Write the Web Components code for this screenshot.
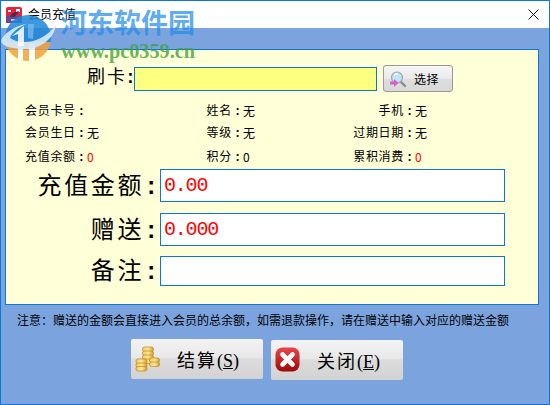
<!DOCTYPE html>
<html lang="zh-CN"><head><meta charset="utf-8"><style>
html,body{margin:0;padding:0;background:#7ba4df}
body{font:12px "Noto Sans CJK SC","Liberation Sans",sans-serif;color:#000}
</style></head><body>
<recharge-window>
<title-bar>会员充值</title-bar>
<water-mark></water-mark>
<yellow-panel>
  <card-row></card-row>
  <info-grid>
    <info-cell label="会员卡号" w="62" first></info-cell><info-cell label="姓名" value="无" w="137"></info-cell><info-cell label="手机" value="无" w="148"></info-cell>
    <info-cell label="会员生日" value="无" w="62" first></info-cell><info-cell label="等级" value="无" w="137"></info-cell><info-cell label="过期日期" value="无" w="148"></info-cell>
    <info-cell label="充值余额" value="0" red w="62" first></info-cell><info-cell label="积分" value="0" w="137"></info-cell><info-cell label="累积消费" value="0" red w="148"></info-cell>
  </info-grid>
  <form-row label="充值金额" value="0.00" h="33"></form-row>
  <form-row label="赠送" value="0.000" h="33" style="margin-top:11px"></form-row>
  <form-row label="备注" value="" h="30" style="margin-top:10px"></form-row>
</yellow-panel>
<note-line>注意：赠送的金额会直接进入会员的总余额，如需退款操作，请在赠送中输入对应的赠送金额</note-line>
<button-bar>
  <big-button icon="coins" text="结算" key="S"></big-button>
  <big-button icon="close" text="关闭" key="E" style="margin-top:1px"></big-button>
</button-bar>
</recharge-window>
<script>
const ICONS={
coins:`<svg width="26" height="26" viewBox="0 0 26 26"><defs><linearGradient id="g" x1="0" x2="1"><stop offset="0" stop-color="#f5c95a"/><stop offset=".5" stop-color="#ffe98e"/><stop offset="1" stop-color="#d99a2b"/></linearGradient></defs>
<g stroke="#b9862c" stroke-width=".7" fill="url(#g)"><rect x="7.5" y="1" width="11" height="4.5" rx="2"/><rect x="7.5" y="5" width="11" height="4.5" rx="2"/><rect x="7.5" y="9" width="11" height="4.5" rx="2"/><rect x="7.5" y="13" width="11" height="4.5" rx="2"/><rect x="14.500" y="12" width="10" height="4.500" rx="2"/><rect x="14.500" y="16" width="10" height="4.500" rx="2"/><rect x="1" y="13" width="11" height="4.500" rx="2"/><rect x="1" y="17" width="11" height="4.500" rx="2"/><rect x="1" y="20.500" width="11" height="4.500" rx="2"/></g></svg>`,
close:`<svg width="26" height="26" viewBox="0 0 26 26"><defs><linearGradient id="r" x1="0" x2="0" y1="0" y2="1"><stop offset="0" stop-color="#e8474a"/><stop offset="1" stop-color="#9c0a0a"/></linearGradient></defs><rect x=".5" y=".5" width="24" height="24" rx="7" fill="url(#r)"/><path d="M7.500 7.500 17.500 17.500M17.500 7.500 7.500 17.500" stroke="#fff" stroke-width="4.600" stroke-linecap="round"/></svg>`,
find:`<svg width="18" height="18" viewBox="0 0 18 18"><path d="M11 11l5 5" stroke="#8a8a8a" stroke-width="2.400" stroke-linecap="round"/><circle cx="8" cy="7.500" r="5.500" fill="#bfe6f7" stroke="#9aa4ab" stroke-width="1.200"/><path d="M5 5.500a3.500 3 0 0 1 4-1.500" stroke="#fff" fill="none" stroke-width="1.200"/><path d="M1 11.500h4v-2.500l4.500 4-4.500 4v-2.500h-4z" fill="#d95fc2"/></svg>`
};
function def(name,css,html){
  customElements.define(name,class extends HTMLElement{
    connectedCallback(){
      if(this.shadowRoot)return;
      const s=this.attachShadow({mode:'open'});
      s.innerHTML=`<style>${css}</style>`+(typeof html==='function'?html(this):html);
    }
  });
}
def('recharge-window',`:host{display:flex;flex-direction:column;position:relative;box-sizing:border-box;width:550px;height:405px;border:1px solid #0a78d4;background:#7ba4df;overflow:hidden}`,`<slot></slot>`);
def('title-bar',`:host{display:flex;align-items:center;height:27px;background:#fff;flex:none;font-size:12px;padding-left:5px}
 .t{margin-left:6px;position:relative;top:-1px}.x{margin-left:auto;margin-right:10px;display:flex}`,
 `<svg width="16" height="16" viewBox="0 0 16 16"><rect width="16" height="16" rx="2" fill="#e8203a"/><rect y="9" width="16" height="7" fill="#6a4a8c"/><path d="M2 3h3v2H2zM10 2h4v3h-4z" fill="#fff"/><path d="M4 10c2-5 6-5 9-6-2 3-3 5-5 6z" fill="#4a2a5c"/><rect x="5" y="12" width="6" height="2" fill="#b9c7e6"/></svg><span class="t"><slot></slot></span>
 <span class="x"><svg width="11" height="11" viewBox="0 0 11 11"><path d="M.5.5l10 10M10.500.5l-10 10" stroke="#111" stroke-width="1"/></svg></span>`);
def('water-mark',`:host{display:block;position:absolute;left:-1px;top:-1px;width:210px;height:70px;pointer-events:none}
 svg{position:absolute;left:0;top:14px}
 .a{position:absolute;left:60px;top:4px;font:700 27px/36px "Noto Sans CJK SC",sans-serif;color:rgba(33,140,235,.72);white-space:nowrap}
 .b{position:absolute;left:61px;top:40px;font:700 20.300px/22px "Liberation Serif",serif;color:rgba(62,160,62,.8);white-space:nowrap}`,
 `<svg width="60" height="50" viewBox="0 0 60 50"><defs><clipPath id="c"><circle cx="28" cy="24" r="23"/></clipPath></defs>
 <g clip-path="url(#c)" opacity=".85"><rect width="60" height="50" fill="#1d86d8"/><rect y="28" width="60" height="22" fill="#f2a23c"/><path d="M18 30h5v20h-5zM29 30h6v20h-6z" fill="#fff"/></g>
 <path d="M1 27C3 20 14 12 26 10c-8 4-14 8-16 14 8 6 30 8 46-13-2 14-16 24-30 24C14 35 2 33 1 27z" fill="#d6e8f6" opacity=".92"/>
 <path d="M12 22l12-10v20h-6V20z" fill="#fff" opacity=".85"/><path d="M28 24V10h6l-1 15z" fill="#7fbdec" opacity=".7"/></svg>
 <div class="a">河东软件园</div><div class="b">www.pc0359.cn</div>`);
def('yellow-panel',`:host{display:flex;flex-direction:column;box-sizing:border-box;height:256px;margin:21px 10px 0 4px;flex:none;border:1px solid #0a78d4;background:#ffffd8;padding-top:15px}`,`<slot></slot>`);
def('card-row',`:host{display:flex;align-items:center;height:27px}
 .l{width:128px;box-sizing:border-box;padding-right:2px;text-align:right;font-size:18px;line-height:24px;letter-spacing:2px;position:relative;top:-2px;white-space:nowrap}
 .c{display:inline-block;width:7px;margin-left:-2px;text-align:center;letter-spacing:0;font:700 18px/24px "Liberation Mono",monospace}
 .i{width:243px;height:24px;box-sizing:border-box;border:1px solid #0a78d4;background:#ffff80}
 .b{margin-left:6px;width:70px;height:27px;box-sizing:border-box;border:1px solid #999;border-radius:3px;background:linear-gradient(#f6f6f6,#e9e9e9 50%,#dedede 52%,#d8d8d8);display:flex;align-items:center;padding-left:5px;font-size:12px;letter-spacing:.6px}
 .b span{margin-left:7px}`,
 `<div class="l">刷卡<span class="c">:</span></div><div class="i"></div><div class="b">${ICONS.find}<span>选择</span></div>`);
def('info-grid',`:host{display:grid;grid-template-columns:100px 161px auto;justify-content:start;grid-template-rows:22px 22px 26px;margin-top:7px}`,`<slot></slot>`);
def('info-cell',`:host{display:flex;align-items:center;font-size:12px;letter-spacing:.7px;white-space:nowrap}
 .l{text-align:right;box-sizing:border-box;flex:none}.v.red{color:#f00}
 .c{display:inline-block;width:11px;text-align:center;letter-spacing:0;font:700 12px "Liberation Mono",monospace}
 .v{font-family:"Noto Sans CJK SC","Liberation Sans",sans-serif}`,
 t=>{const first=t.hasAttribute('first');return `<span class="l" style="width:${t.getAttribute('w')}px;${first?'margin-left:19px;text-align:left':''}">${t.getAttribute('label')}<span class="c">:</span></span><span class="v ${t.hasAttribute('red')?'red':''}">${t.getAttribute('value')||''}</span>`});
def('form-row',`:host{display:flex;align-items:center;flex:none}
 .l{width:154px;box-sizing:border-box;padding-right:6px;text-align:right;font-size:24px;letter-spacing:2.600px;white-space:nowrap;line-height:30px}
 .c{display:inline-block;width:10px;text-align:center;letter-spacing:0;font:700 24px/30px "Liberation Mono",monospace}
 .i{width:345px;height:100%;box-sizing:border-box;border:1px solid #0a78d4;background:#fff;font:20px/31px "Liberation Mono",monospace;letter-spacing:-1.200px;color:#f00;padding:0 0 0 3px}`,
 t=>`<style>:host{height:${t.getAttribute('h')}px}</style><div class="l">${t.getAttribute('label')}<span class="c">:</span></div><div class="i">${t.getAttribute('value')}</div>`);
def('note-line',`:host{display:block;flex:none;font-size:12px;line-height:16px;margin:7px 0 0 16px;white-space:nowrap}`,`<slot></slot>`);
def('button-bar',`:host{display:flex;align-items:flex-start;gap:8px;flex:none;margin:11px 0 0 130px}`,`<slot></slot>`);
def('big-button',`:host{display:flex;align-items:center;box-sizing:border-box;width:132px;height:40px;border-radius:2px;background:linear-gradient(#f3f3f3,#e8e8e8 46%,#dcdcdc 50%,#d2d2d2);padding-left:4px;flex:none}
 svg{flex:none}.t{margin-left:16px;font-size:18px;letter-spacing:2px;white-space:nowrap}.k{font-family:"Liberation Serif",serif;letter-spacing:0}u{text-underline-offset:1px}`,
 t=>`${ICONS[t.getAttribute('icon')]}<span class="t">${t.getAttribute('text')}<span class="k">(<u>${t.getAttribute('key')}</u>)</span></span>`);
</script>
</body></html>
